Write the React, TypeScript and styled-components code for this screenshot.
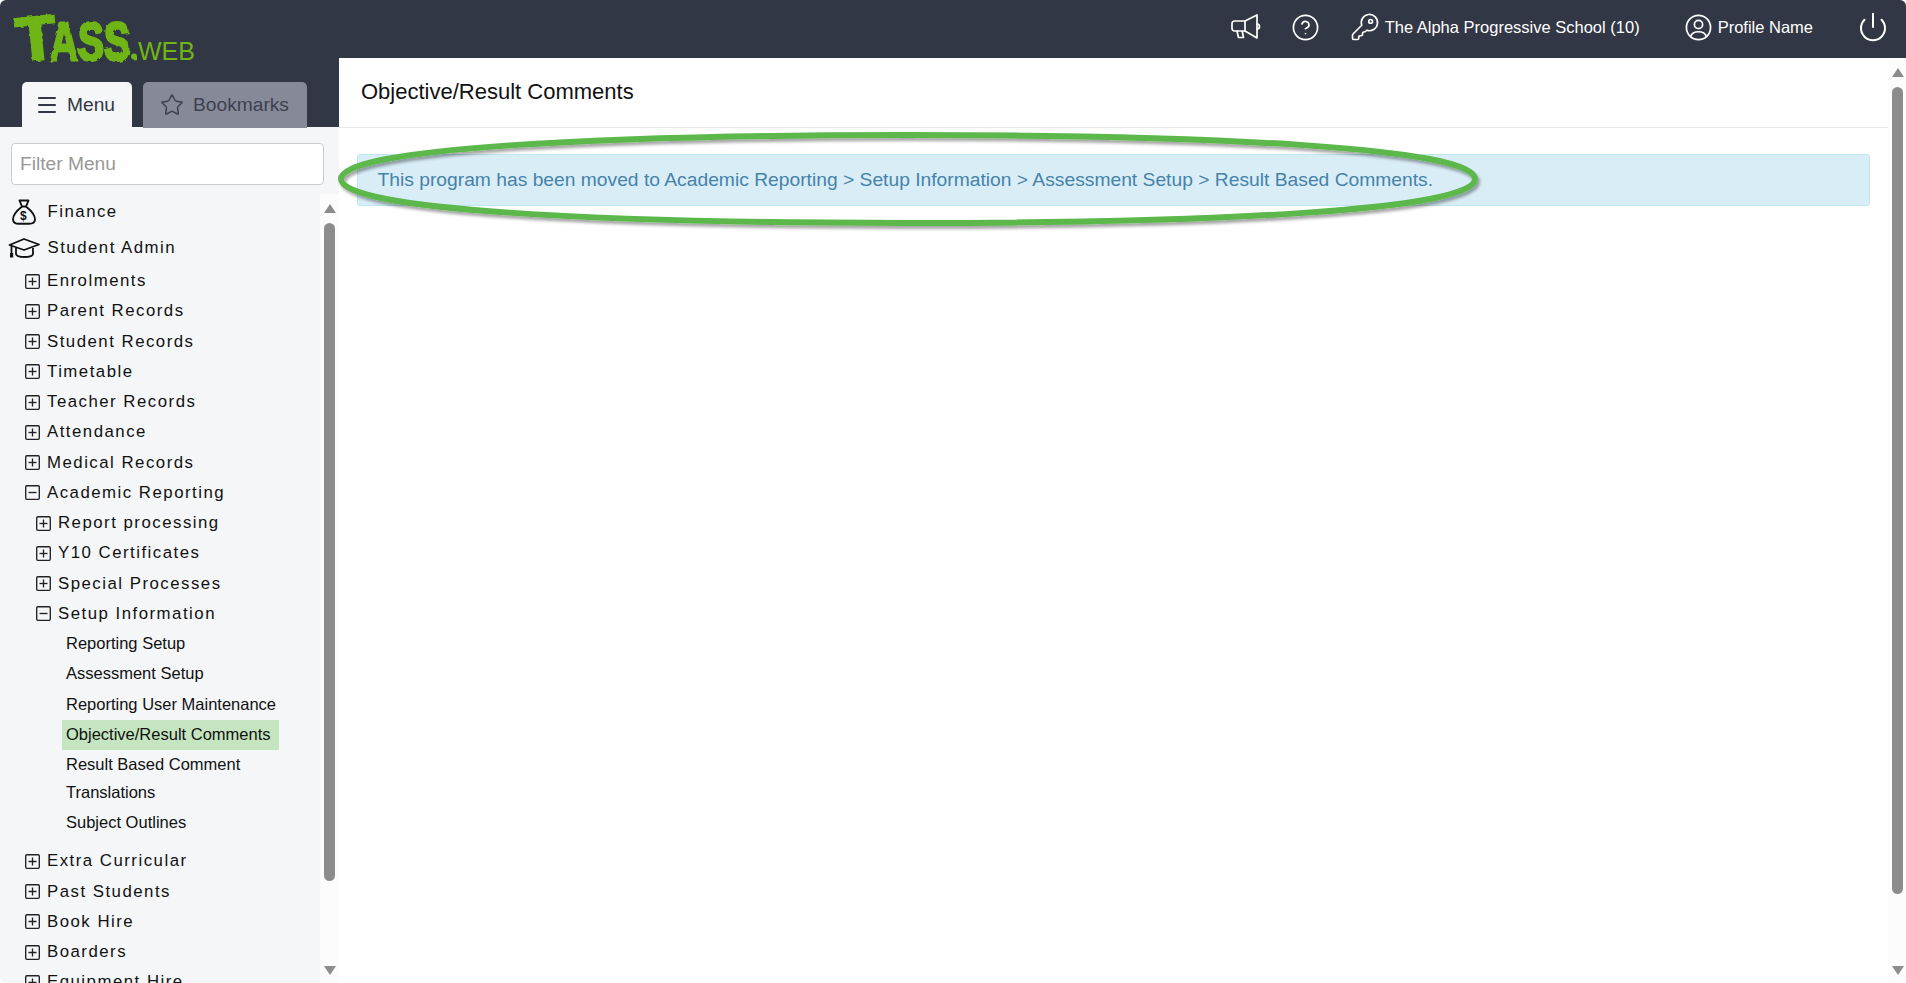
import React from 'react';
import styled, { createGlobalStyle } from 'styled-components';
import { CircleHelp, Menu as MenuIcon, Star } from 'lucide-react';

const GlobalStyle = createGlobalStyle`
  html, body {
    margin: 0;
    padding: 0;
    background: #fff;
    overflow: hidden;
  }
  * {
    box-sizing: border-box;
  }
  body {
    font-family: "Liberation Sans", Arial, sans-serif;
  }
`;

const Shell = styled.div`
  position: relative;
  width: 1906px;
  height: 983px;
  display: flex;
  flex-direction: column;
  overflow: hidden;
  border-radius: 6px;
  background: #fff;
`;

const TopBar = styled.header`
  flex: none;
  height: 58px;
  display: flex;
  align-items: center;
  background: #323745;
  color: #fff;
`;

const LogoWrap = styled.div`
  position: relative;
  z-index: 1;
  flex: none;
  width: 210px;
  height: 58px;
  svg {
    display: block;
    overflow: visible;
  }
`;

const TopActions = styled.div`
  margin-left: auto;
  display: flex;
  align-items: center;
  height: 100%;
  padding-right: 17px;
`;

const TopIcon = styled.span<{ $left: number }>`
  display: flex;
  align-items: center;
  margin-left: ${({ $left }) => $left}px;
  margin-top: -4px;
`;

const TopText = styled.span`
  margin-left: 5px;
  margin-top: -4px;
  font-size: 16.5px;
  white-space: nowrap;
`;

const Body = styled.div`
  flex: 1;
  min-height: 0;
  display: flex;
`;

const Sidebar = styled.aside`
  flex: none;
  width: 339px;
  display: flex;
  flex-direction: column;
  background: #f4f6f8;
`;

const TabStrip = styled.div`
  flex: none;
  height: 69px;
  display: flex;
  align-items: flex-end;
  gap: 11px;
  padding-left: 22px;
  background: #323745;
`;

const Tab = styled.div<{ $active?: boolean }>`
  height: ${({ $active }) => ($active ? '45px' : '46px')};
  margin-bottom: ${({ $active }) => ($active ? '0' : '-1px')};
  width: ${({ $active }) => ($active ? '110px' : '164px')};
  display: flex;
  align-items: center;
  gap: ${({ $active }) => ($active ? '8px' : '9px')};
  padding-left: ${({ $active }) => ($active ? '13px' : '17px')};
  border-radius: 5px 5px 0 0;
  font-size: 19.2px;
  background: ${({ $active }) => ($active ? '#f4f6f8' : '#858998')};
  color: ${({ $active }) => ($active ? '#323745' : '#3d4150')};
  position: relative;
`;

const FilterRow = styled.div`
  flex: none;
  padding: 16px 15px 9px 11px;
`;

const FilterInput = styled.input`
  display: block;
  width: 100%;
  height: 42px;
  padding: 0 8px;
  border: 1px solid #cccccc;
  border-radius: 4px;
  background: #fff;
  font-family: "Liberation Sans", Arial, sans-serif;
  font-size: 19.2px;
  outline: none;
  &::placeholder {
    color: #999;
    opacity: 1;
  }
`;

const MenuArea = styled.div`
  flex: 1;
  min-height: 0;
  display: flex;
`;

const MenuList = styled.nav`
  flex: 1;
  min-width: 0;
  overflow: hidden;
`;

const ModuleRow = styled.div`
  height: 36px;
  display: flex;
  align-items: center;
  font-size: 16.8px;
  letter-spacing: 1.5px;
  color: #111;
`;

const ModuleIcon = styled.span`
  flex: none;
  width: 47.5px;
  display: flex;
  justify-content: center;
`;

const TreeRow = styled.div<{ $depth: number }>`
  height: 30.25px;
  display: flex;
  align-items: center;
  gap: 7.5px;
  padding-left: ${({ $depth }) => 24.5 + $depth * 11}px;
  font-size: 16.8px;
  letter-spacing: 1.5px;
  white-space: nowrap;
  color: #111;
`;

const TreeGroup = styled.div`
  margin-top: 6px;
`;

const LeafRow = styled.div<{ $height: number; $selected?: boolean }>`
  height: ${({ $height }) => $height}px;
  width: 217px;
  margin-left: 62px;
  padding: 0 0 1px 4px;
  display: flex;
  align-items: center;
  font-size: 16.5px;
  white-space: nowrap;
  color: #111;
  background: ${({ $selected }) => ($selected ? '#c5e5c0' : 'transparent')};
`;

const ScrollTrack = styled.div<{ $width: number; $inset?: number }>`
  flex: none;
  width: ${({ $width }) => $width}px;
  padding-left: ${({ $inset }) => $inset ?? 0}px;
  padding-top: 10px;
  padding-bottom: 8px;
  display: flex;
  flex-direction: column;
  align-items: center;
  background: #fcfcfc;
`;

const ArrowUp = styled.div`
  flex: none;
  width: 0;
  height: 0;
  border-left: 6.5px solid transparent;
  border-right: 6.5px solid transparent;
  border-bottom: 9px solid #8c8c8c;
`;

const ArrowDown = styled.div`
  flex: none;
  width: 0;
  height: 0;
  margin-top: auto;
  border-left: 6.5px solid transparent;
  border-right: 6.5px solid transparent;
  border-top: 9px solid #8c8c8c;
`;

const ScrollThumb = styled.div<{ $height: number }>`
  flex: none;
  width: 11px;
  height: ${({ $height }) => $height}px;
  margin-top: 10px;
  border-radius: 5.5px;
  background: #8c8c8c;
`;

const Main = styled.main`
  flex: 1;
  min-width: 0;
  display: flex;
`;

const Content = styled.div`
  flex: 1;
  min-width: 0;
`;

const TitleBar = styled.div`
  height: 70px;
  display: flex;
  align-items: center;
  padding: 0 0 1px 22px;
  border-bottom: 1px solid #e7e7e7;
`;

const Title = styled.h1`
  margin: 0;
  font-size: 22px;
  font-weight: 400;
  color: #111;
`;

const Alert = styled.div`
  height: 52px;
  margin: 26px 18px 0 18px;
  padding: 0 19.5px;
  display: flex;
  align-items: center;
  border: 1px solid #bce8f1;
  border-radius: 3px;
  background: #d9edf7;
  color: #4583aa;
  font-size: 19.25px;
  white-space: nowrap;
`;

const CalloutRing = styled.svg`
  position: absolute;
  left: 330px;
  top: 120px;
  pointer-events: none;
`;

const PlusBox = styled.svg`
  flex: none;
  width: 15px;
  height: 15px;
`;

const Logo = () => (
  <svg width="210" height="58" viewBox="0 0 210 58">
    <defs>
      <filter id="rough" x="-5%" y="-10%" width="110%" height="120%">
        <feTurbulence type="fractalNoise" baseFrequency="0.16" numOctaves="2" seed="4" result="n" />
        <feDisplacementMap in="SourceGraphic" in2="n" scale="3.5" />
      </filter>
    </defs>
    <g filter="url(#rough)" fill="#6fb514" stroke="#6fb514" fontFamily="'Liberation Sans', sans-serif" fontWeight="700">
      <text x="16" y="60" fontSize="62" strokeWidth="2.5" transform="rotate(-6 34 36)" textLength="40" lengthAdjust="spacingAndGlyphs">
        T
      </text>
      <text x="50" y="60" fontSize="53" strokeWidth="2.8" textLength="80" lengthAdjust="spacingAndGlyphs">
        ASS
      </text>
      <circle cx="134" cy="56.5" r="3" stroke="none" />
    </g>
    <text
      x="138"
      y="60"
      fontSize="26"
      fill="#6fb514"
      fontFamily="'Liberation Sans', sans-serif"
      textLength="57"
      lengthAdjust="spacingAndGlyphs"
    >
      WEB
    </text>
  </svg>
);

const Megaphone = () => (
  <svg width="30" height="26" viewBox="0 0 30 26" fill="none" stroke="#fff" strokeWidth="1.7" strokeLinejoin="round" strokeLinecap="round">
    <path d="M14 7 L26 1 V24 L14 17 Z" />
    <path d="M14 7 H3.5 a2.5 2.5 0 0 0 -2.5 2.5 v5 a2.5 2.5 0 0 0 2.5 2.5 H14" />
    <path d="M6 17 l1.5 6.5 h5 l-1.2 -6" />
    <path d="M26 10 a2.5 2.5 0 0 1 0 5" />
  </svg>
);

const KeyIcon = () => (
  <svg width="30" height="30" viewBox="0 0 24 24" fill="none" stroke="#fff" strokeWidth="1.35" strokeLinejoin="round" strokeLinecap="round">
    <path d="M2.586 17.414A2 2 0 0 0 2 18.828V21a1 1 0 0 0 1 1h3a1 1 0 0 0 1-1v-1a1 1 0 0 1 1-1h1a1 1 0 0 0 1-1v-1a1 1 0 0 1 1-1h.172a2 2 0 0 0 1.414-.586l.814-.814a6.5 6.5 0 1 0-4-4z" />
    <circle cx="16.5" cy="7.5" r="1.5" />
  </svg>
);

const UserIcon = () => (
  <svg width="29" height="29" viewBox="0 0 24 24" fill="none" stroke="#fff" strokeWidth="1.4" strokeLinecap="round">
    <circle cx="12" cy="12" r="10" />
    <circle cx="12" cy="9.5" r="3.4" />
    <path d="M5.6 19.2 c0.9-2.6 3.2-3.7 6.4-3.7 s5.5 1.1 6.4 3.7" />
  </svg>
);

const PowerIcon = () => (
  <svg width="32" height="32" viewBox="0 0 24 24" fill="none" stroke="#fff" strokeWidth="1.5" strokeLinecap="round">
    <path d="M12 2v10" />
    <path d="M18.4 6.6a9 9 0 1 1-12.79 0" />
  </svg>
);

const MoneyBag = () => (
  <svg width="26" height="26" viewBox="0 0 26 26" fill="none" stroke="#111" strokeWidth="1.9" strokeLinejoin="round">
    <path d="M8.5 1.5 H17.5 L15 7.5 H11 Z" />
    <path d="M11 7.5 C6 11.5 1.8 16.5 2 20.5 C2.2 23.5 4.5 24.8 8 24.8 H18 C21.5 24.8 23.8 23.5 24 20.5 C24.2 16.5 20 11.5 15 7.5" />
    <text x="13" y="20.5" fontSize="12" fontWeight="700" fontFamily="'Liberation Sans', sans-serif" textAnchor="middle" fill="#111" stroke="none">
      $
    </text>
  </svg>
);

const GradCap = () => (
  <svg width="32" height="20" viewBox="0 0 32 20" fill="none" stroke="#111" strokeWidth="1.8" strokeLinejoin="round">
    <path d="M16 1 L31 6.5 L16 12 L1.5 7 Z" />
    <path d="M8 10 V15.5 C8 18 12 19 16.5 19 S25 18 25 15.5 V10" />
    <path d="M3.5 8 V15" />
    <rect x="2" y="15" width="3.2" height="4.5" fill="#111" stroke="none" />
  </svg>
);

const Expander = ({ open }: { open?: boolean }) => (
  <PlusBox viewBox="0 0 15 15" fill="none" stroke="#222" strokeWidth="1.35">
    <rect x="0.7" y="0.7" width="13.6" height="13.6" rx="1.2" />
    <path d="M3.5 7.5 H11.5" />
    {!open && <path d="M7.5 3.5 V11.5" />}
  </PlusBox>
);

const Scrollbar = ({ width, inset, thumb }: { width: number; inset?: number; thumb: number }) => (
  <ScrollTrack $width={width} $inset={inset}>
    <ArrowUp />
    <ScrollThumb $height={thumb} />
    <ArrowDown />
  </ScrollTrack>
);

const beforeReporting = ['Enrolments', 'Parent Records', 'Student Records', 'Timetable', 'Teacher Records', 'Attendance', 'Medical Records'];
const reportingChildren = ['Report processing', 'Y10 Certificates', 'Special Processes'];
const leaves = [
  { label: 'Reporting Setup', height: 30.25 },
  { label: 'Assessment Setup', height: 30.25 },
  { label: 'Reporting User Maintenance', height: 30.25 },
  { label: 'Objective/Result Comments', height: 30.25, selected: true },
  { label: 'Result Based Comment', height: 30.25 },
  { label: 'Translations', height: 26 },
  { label: 'Subject Outlines', height: 34 },
];
const afterReporting = ['Extra Curricular', 'Past Students', 'Book Hire', 'Boarders', 'Equipment Hire'];

export default function App() {
  return (
    <>
      <GlobalStyle />
      <Shell>
        <TopBar>
          <LogoWrap>
            <Logo />
          </LogoWrap>
          <TopActions>
            <TopIcon $left={0}>
              <Megaphone />
            </TopIcon>
            <TopIcon $left={30}>
              <CircleHelp size={29} strokeWidth={1.4} color="#fff" />
            </TopIcon>
            <TopIcon $left={30}>
              <KeyIcon />
            </TopIcon>
            <TopText>The Alpha Progressive School (10)</TopText>
            <TopIcon $left={44}>
              <UserIcon />
            </TopIcon>
            <TopText>Profile Name</TopText>
            <TopIcon $left={44}>
              <PowerIcon />
            </TopIcon>
          </TopActions>
        </TopBar>
        <Body>
          <Sidebar>
            <TabStrip>
              <Tab $active>
                <MenuIcon size={24} strokeWidth={2} />
                Menu
              </Tab>
              <Tab>
                <Star size={24} strokeWidth={1.5} />
                Bookmarks
              </Tab>
            </TabStrip>
            <FilterRow>
              <FilterInput placeholder="Filter Menu" />
            </FilterRow>
            <MenuArea>
              <MenuList>
                <ModuleRow>
                  <ModuleIcon>
                    <MoneyBag />
                  </ModuleIcon>
                  Finance
                </ModuleRow>
                <ModuleRow>
                  <ModuleIcon>
                    <GradCap />
                  </ModuleIcon>
                  Student Admin
                </ModuleRow>
                {beforeReporting.map((label) => (
                  <TreeRow key={label} $depth={0}>
                    <Expander />
                    {label}
                  </TreeRow>
                ))}
                <TreeRow $depth={0}>
                  <Expander open />
                  Academic Reporting
                </TreeRow>
                {reportingChildren.map((label) => (
                  <TreeRow key={label} $depth={1}>
                    <Expander />
                    {label}
                  </TreeRow>
                ))}
                <TreeRow $depth={1}>
                  <Expander open />
                  Setup Information
                </TreeRow>
                {leaves.map((leaf) => (
                  <LeafRow key={leaf.label} $height={leaf.height} $selected={leaf.selected}>
                    {leaf.label}
                  </LeafRow>
                ))}
                <TreeGroup>
                  {afterReporting.map((label) => (
                    <TreeRow key={label} $depth={0}>
                      <Expander />
                      {label}
                    </TreeRow>
                  ))}
                </TreeGroup>
              </MenuList>
              <Scrollbar width={19} thumb={658} />
            </MenuArea>
          </Sidebar>
          <Main>
            <Content>
              <TitleBar>
                <Title>Objective/Result Comments</Title>
              </TitleBar>
              <Alert>
                This program has been moved to Academic Reporting &gt; Setup Information &gt; Assessment Setup &gt; Result Based Comments.
              </Alert>
            </Content>
            <Scrollbar width={18} inset={1} thumb={807} />
          </Main>
        </Body>
        <CalloutRing width="1160" height="120" viewBox="330 120 1160 120">
          <defs>
            <filter id="ringShadow" x="-2%" y="-20%" width="104%" height="140%">
              <feDropShadow dx="2" dy="3" stdDeviation="1.5" floodColor="#000" floodOpacity="0.35" />
            </filter>
          </defs>
          <path
            d="M341 179 C341 148 600 135 908 135 C1216 135 1475 148 1475 179 C1475 210 1216 223 908 223 C600 223 341 210 341 179 Z"
            fill="none"
            stroke="#5bb84c"
            strokeWidth="6"
            filter="url(#ringShadow)"
          />
        </CalloutRing>
      </Shell>
    </>
  );
}
